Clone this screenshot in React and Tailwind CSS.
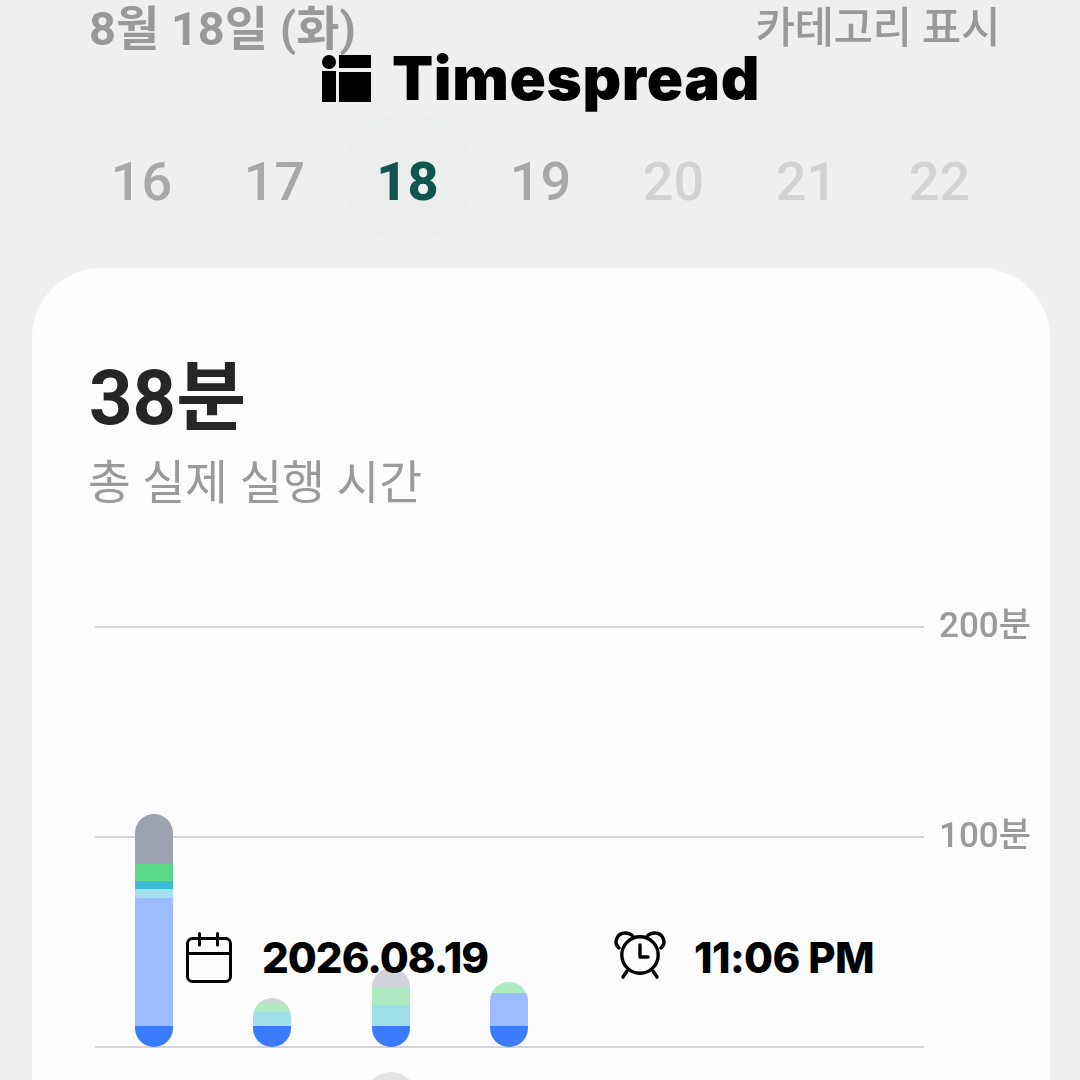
const kr = { fontFamily: 'Roboto, "Noto Sans CJK KR", sans-serif' };
const inter = { fontFamily: 'Inter, sans-serif' };

const days = [
  { n: 16, c: "text-[#a8a8a8] font-medium" },
  { n: 17, c: "text-[#a8a8a8] font-medium" },
  { n: 18, c: "text-[#10564f] font-extrabold", active: true },
  { n: 19, c: "text-[#a8a8a8] font-medium" },
  { n: 20, c: "text-[#d2d2d2] font-medium" },
  { n: 21, c: "text-[#d2d2d2] font-medium" },
  { n: 22, c: "text-[#d2d2d2] font-medium" },
];

const bars = [
  [["h-[50px]", "bg-[#9ca3af]"], ["h-[17px]", "bg-[#5bd88a]"], ["h-[8px]", "bg-[#3cbcd8]"], ["h-[9px]", "bg-[#a3e0ee]"], ["h-[128px]", "bg-[#9bbcff]"], ["h-[21px]", "bg-[#3b7cff]"]],
  [["h-[6px]", "bg-[#d1d5db]"], ["h-[8px]", "bg-[#aeeac2]"], ["h-[14px]", "bg-[#9fdfe9]"], ["h-[21px]", "bg-[#3b7cff]"]],
  [["h-[19px]", "bg-[#d1d5db]"], ["h-[18px]", "bg-[#aeeac2]"], ["h-[21px]", "bg-[#9fdfe9]"], ["h-[21px]", "bg-[#3b7cff]"]],
  [["h-[11px]", "bg-[#aeeac2]"], ["h-[33px]", "bg-[#9bbcff]"], ["h-[21px]", "bg-[#3b7cff]"]],
];

function GridLine({ label }) {
  return (
    <div className="h-[210px] flex items-center relative">
      <div className="w-[829px] h-[2px] bg-[#d4d4d4]" />
      {label && (
        <span className="ml-[15px] text-[35px] leading-none font-medium text-[#9a9a9a] -mt-[4px]" style={kr}>
          {label}
        </span>
      )}
    </div>
  );
}

function LogoMark() {
  return (
    <svg width="49" height="47" viewBox="0 0 49 47" fill="#000">
      <circle cx="7" cy="7" r="7" />
      <rect x="17" y="0" width="32" height="13" />
      <rect x="0" y="16" width="14" height="31" />
      <rect x="17" y="17" width="32" height="30" />
    </svg>
  );
}

function CalendarIcon() {
  return (
    <svg width="46" height="51" viewBox="0 0 46 51" fill="none" stroke="#000" strokeWidth="3" strokeLinecap="round" strokeLinejoin="round">
      <rect x="1.5" y="6.5" width="43" height="43" rx="5" />
      <path d="M1.5 21.5H44.5" />
      <path d="M13.5 1.5V13" />
      <path d="M31.5 1.5V13" />
    </svg>
  );
}

function AlarmIcon() {
  return (
    <svg className="-mt-[4px]" width="54" height="52" viewBox="0 0 54 52" fill="none" stroke="#000" strokeWidth="3.4" strokeLinecap="round" strokeLinejoin="round">
      <circle cx="27" cy="25" r="18.2" />
      <path d="M6 18C0 13 4 3 12 3C15 3 18 4 20 6.5" />
      <path d="M48 18C54 13 50 3 42 3C39 3 36 4 34 6.5" />
      <path d="M27 15V27H35" />
      <path d="M14 41L10 47" />
      <path d="M40 41L44 47" />
    </svg>
  );
}

export default function App() {
  return (
    <div className="relative w-[1080px] h-[1080px] overflow-hidden bg-[#efefef]" style={kr}>
      <div className="blur-[0.6px]">
        <div className="h-[56px] pl-[89px] pr-[80px] flex justify-between items-center text-[#999999] leading-none">
          <span className="text-[47px] font-bold">8월 18일 (화)</span>
          <span className="text-[43px] font-medium tracking-[-0.5px]">카테고리 표시</span>
        </div>

        <div className="mt-[56px] pl-[75px] grid grid-cols-[repeat(7,133px)] h-[130px] items-center">
          {days.map((d) => (
            <div key={d.n} className="relative flex items-center justify-center h-[130px]">
              {d.active && <div className="absolute w-[132px] h-[130px] rounded-full bg-[#ebeeed]" />}
              <span className={`relative text-[54px] leading-none mt-[10px] ${d.c}`}>{d.n}</span>
            </div>
          ))}
        </div>

        <div className="mt-[26px] ml-[32px] w-[1018px] h-[900px] rounded-t-[70px] bg-[#fcfcfc] pl-[57px] pt-[90px]">
          <div className="text-[76px] leading-[80px] font-bold text-[#262626]">38분</div>
          <div className="mt-[20px] -ml-[1px] text-[46.5px] leading-[50px] text-[#9a9a9a]">총 실제 실행 시간</div>

          <div className="relative mt-[14px] ml-[6px]">
            <GridLine label="200분" />
            <GridLine label="100분" />
            <GridLine />
            <div className="absolute left-[40px] top-[105px] h-[420px] flex items-end gap-[80.4px]">
              {bars.map((segs, i) => (
                <div key={i} className="w-[38px] rounded-full overflow-hidden flex flex-col">
                  {segs.map(([h, c], j) => (
                    <div key={j} className={`${h} ${c}`} />
                  ))}
                </div>
              ))}
            </div>
            <div className="absolute left-[270px] top-[550px] w-[52px] h-[52px] rounded-full bg-[#e3e3e3]" />
          </div>
        </div>
      </div>

      <div className="absolute left-[322px] top-[55px] flex items-center gap-[21px]">
        <LogoMark />
        <span className="text-[60px] leading-[47px] font-black text-black tracking-[0.65px]" style={inter}>
          Timespread
        </span>
      </div>

      <div className="absolute left-[186px] top-[932px] flex items-center">
        <CalendarIcon />
        <span className="ml-[30px] text-[42px] leading-[51px] font-extrabold text-black tracking-[-1px]" style={inter}>
          2026.08.19
        </span>
      </div>

      <div className="absolute left-[613px] top-[932px] flex items-center">
        <AlarmIcon />
        <span className="ml-[27px] text-[42px] leading-[52px] font-extrabold text-black tracking-[-0.6px]" style={inter}>
          11:06 PM
        </span>
      </div>
    </div>
  );
}
